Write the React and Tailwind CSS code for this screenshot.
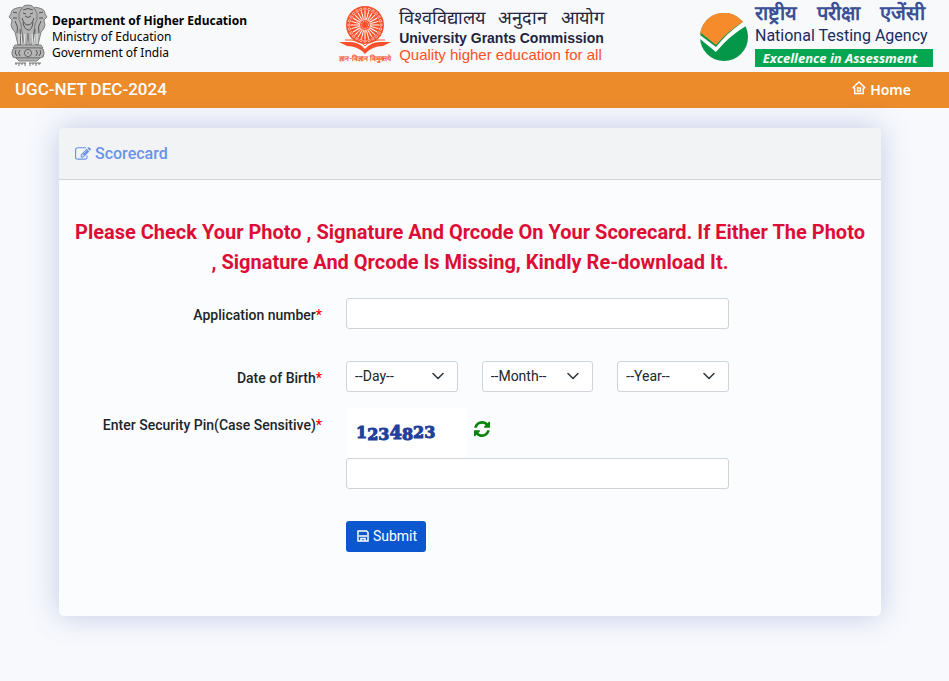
import React from "react";

const roboto = "font-[Roboto,'Liberation_Sans',sans-serif]";
const label = "text-sm font-medium leading-5 text-[#212529] sm:text-right";
const field = "h-[31px] w-full rounded-[3px] border border-[#ced4da] bg-white px-2 text-sm text-[#212529]";

function Emblem() {
  return (
    <svg viewBox="0 0 40 62" className="h-[62px] w-10 shrink-0" role="img" aria-label="State Emblem of India">
      <g fill="#b4b4b4" stroke="#6a6a6a" strokeWidth="0.8">
        <path d="M9 4Q3 5 3 10l-2 3 3 3-1 5q1 5 4 7l3 13h5V16L16 5Q12 2 9 4Z" />
        <path d="M31 4q6 1 6 6l2 3-3 3 1 5q-1 5-4 7l-3 13h-5V16L24 5q4-3 7-1Z" />
        <path d="M14 4q1-3 6-3t6 3l3 5q1 7-2 11l-1 8-2 13h-3l-1-12-1 12h-3l-2-13-1-8q-3-4-2-11Z" />
        <path d="M7 41h26l2 3H5Z" />
        <rect x="4" y="44" width="32" height="10" rx="4" />
        <path d="M8 54h24l-3 3H11Z" />
      </g>
      <g fill="none" stroke="#555" strokeWidth="1">
        <path d="M15 6q5-3 10 0M15 9l3 1m7-1-3 1M17 12q3 3 6 0M14 14q2 7 6 7t6-7M15 18q1 7 5 8t5-8M5 8l4 1M5 14h4M35 8l-4 1m4 5h-4M7 17q4 6 2 12m24-12q-4 6-2 12M12 25l1 16m14-16-1 16" />
        <path d="M8 46q-2 3 1 6m3-6q-3 3 0 6m16-6q3 3 0 6m4-6q2 3-1 6" />
      </g>
      <path d="M13 30l1 11m3-11-1 11m8-11 1 11m2-11-1 11M11 30v10m18-10v10" stroke="#e8e8e8" strokeWidth="1" />
      <circle cx="20" cy="49" r="3.5" fill="#ddd" stroke="#555" />
      <path d="M20 46v6m-3-3h6M18 47l4 4m0-4-4 4" stroke="#777" strokeWidth="0.5" />
      <path d="M7 59h11m3 0h12M8 59v2m3-2v3m3-3v2m3-2v3m5-3v3m3-3v2m3-2v3m3-3v2" stroke="#555" strokeWidth="0.8" />
    </svg>
  );
}

function UgcLogo() {
  return (
    <svg viewBox="0 0 52 48" className="h-12 w-[52px]" role="img" aria-label="UGC">
      <circle cx="26" cy="19" r="19" fill="#f9502b" />
      <g stroke="#fff" strokeWidth="1">
        {Array.from({ length: 24 }, (_, i) => (
          <g key={i} transform={`rotate(${i * 15} 26 19)`}>
            <path d="M26 13V5" />
            <circle cx="26" cy="3" r="1.2" fill="none" strokeWidth="0.6" />
          </g>
        ))}
      </g>
      <circle cx="26" cy="19" r="5.5" fill="#f9502b" stroke="#fff" strokeWidth="0.8" />
      <circle cx="26" cy="19" r="3.5" fill="none" stroke="#fff" strokeWidth="0.7" strokeDasharray="1 1" />
      <path d="M0 36h11q9 0 15 7 6-7 15-7h11l-8 4q-11 0-18 8-7-8-18-8Z" fill="#f9502b" />
      <path d="M6 34h6q9 0 14 6 5-6 14-6h6" fill="none" stroke="#f9502b" strokeWidth="1" />
    </svg>
  );
}

function NtaLogo() {
  return (
    <svg viewBox="0 0 48 48" className="size-12 shrink-0" role="img" aria-label="NTA">
      <circle cx="24" cy="24" r="24" fill="#049649" />
      <path d="M0 24a24 24 0 0 1 43-15Q28 18 16 32L1 20Z" fill="#f68b2b" />
      <path d="M0 22 16 34Q27 20 43 9l3 4Q29 23 16 39L0 26Z" fill="#fff" />
    </svg>
  );
}

function HomeIcon() {
  return (
    <svg viewBox="0 0 14 14" className="mb-1 size-[14px]" fill="none" stroke="currentColor" strokeWidth="1.4" aria-hidden="true">
      <path d="M.7 7 7 1 13.300 7M2.700 6.500v6h8.600v-6M.7 7h2M11.300 7h2M5.500 7h3v3h-3Z" />
    </svg>
  );
}

function EditIcon() {
  return (
    <svg viewBox="0 0 1792 1792" className="size-4" fill="currentColor" aria-hidden="true">
      <path d="M888 1184l116-116-152-152-116 116v56h96v96h56zm440-720q-16-16-33 1l-350 350q-17 17-1 33t33-1l350-350q17-17 1-33zm80 594v190q0 119-84.5 203.5t-203.5 84.5h-832q-119 0-203.5-84.5t-84.5-203.5v-832q0-119 84.5-203.5t203.5-84.5h832q63 0 117 25 15 7 18 23 3 17-9 29l-49 49q-14 14-32 8-23-6-45-6h-832q-66 0-113 47t-47 113v832q0 66 47 113t113 47h832q66 0 113-47t47-113v-126q0-13 9-22l64-64q15-15 35-7t20 29zm-96-738l288 288-672 672h-288v-288zm444 132l-92 92-288-288 92-92q28-28 68-28t68 28l152 152q28 28 28 68t-28 68z" />
    </svg>
  );
}

function RefreshIcon() {
  return (
    <svg viewBox="128 128 1536 1536" className="size-4" fill="currentColor" aria-hidden="true">
      <path d="M1639 1056q0 5-1 7-64 268-268 434.5t-478 166.5q-146 0-282.5-55t-243.5-157l-129 129q-19 19-45 19t-45-19-19-45v-448q0-26 19-45t45-19h448q26 0 45 19t19 45-19 45l-137 137q71 66 161 102t187 36q134 0 250-65t186-179q11-17 53-117 8-23 30-23h192q13 0 22.5 9.5t9.5 22.5zm25-800v448q0 26-19 45t-45 19h-448q-26 0-45-19t-19-45 19-45l138-138q-148-137-349-137-134 0-250 65t-186 179q-11 17-53 117-8 23-30 23h-199q-13 0-22.5-9.5t-9.5-22.5v-7q65-268 270-434.5t480-166.5q146 0 284 55.5t245 156.5l130-129q19-19 45-19t45 19 19 45z" />
    </svg>
  );
}

function SaveIcon() {
  return (
    <svg viewBox="0 0 12 12" className="size-3" fill="none" stroke="currentColor" strokeWidth="1.5" aria-hidden="true">
      <path d="M1 1h8.500L11 2.500V11H1Z" />
      <path d="M2 6h8M4 11V8.500h4V11" />
    </svg>
  );
}

function DatePart({ name, text }) {
  return (
    <div className="relative flex-1">
      <select aria-label={name} className={`${field} appearance-none pb-[2px]`}>
        <option>{text}</option>
      </select>
      <svg viewBox="0 0 16 16" className="pointer-events-none absolute top-[7px] right-3 size-4" fill="none" stroke="#343a40" strokeWidth="1.6" strokeLinecap="round" strokeLinejoin="round" aria-hidden="true">
        <path d="m3 5.500 5 5 5-5" />
      </svg>
    </div>
  );
}

function Row({ id, text, children }) {
  return (
    <div className="grid gap-x-6 gap-y-2 sm:grid-cols-[247px_minmax(0,383px)]">
      <label htmlFor={id} className={`${label} pt-[7px]`}>
        {text}<span className="text-[#ff0000]">*</span>
      </label>
      {children}
    </div>
  );
}

export default function App() {
  return (
    <div className={`min-h-screen bg-[#f8f9fd] ${roboto}`}>
      <header className="flex min-h-[72px] flex-wrap items-start justify-between gap-4 bg-[#f8f9fa] pr-4 pl-2">
        <div className="flex gap-1 pt-1">
          <Emblem />
          <div className="pt-[9px] font-['Noto_Sans','Open_Sans',sans-serif] text-[12px] leading-4 text-black">
            <p className="font-bold">Department of Higher Education</p>
            <p>Ministry of Education</p>
            <p>Government of India</p>
          </div>
        </div>
        <div className="flex gap-2 pt-[6px] pr-1">
          <div className="flex flex-col items-center">
            <UgcLogo />
            <span className="text-[7px] leading-[10px] font-bold text-[#f9502b]">ज्ञान-विज्ञान विमुक्तये</span>
          </div>
          <div className="font-['Liberation_Sans',Arial,sans-serif] text-[#24243f]">
            <p className="flex justify-between text-[18px] leading-6 font-medium"><span>विश्वविद्यालय</span> <span>अनुदान</span> <span>आयोग</span></p>
            <p className="text-[14px] leading-4 font-bold">University Grants Commission</p>
            <p className="text-[15px] leading-[18px] text-[#ff5022]">Quality higher education for all</p>
          </div>
        </div>
        <div className="flex items-end gap-[7px] pt-[3px]">
          <div className="pb-[6px]"><NtaLogo /></div>
          <div className="w-[178px] text-[#192c61]">
            <p className="flex w-[170px] justify-between text-[20px] leading-5 font-bold text-[#3b5096]"><span>राष्ट्रीय</span> <span>परीक्षा</span> <span>एजेंसी</span></p>
            <p className="text-base leading-[26px] font-normal whitespace-nowrap">National Testing Agency</p>
            <p className="bg-[#04a651] pr-2 text-center font-['Open_Sans',sans-serif] text-[13px] leading-[18px] font-bold whitespace-nowrap text-white italic">Excellence in Assessment</p>
          </div>
        </div>
      </header>
      <nav className="flex h-9 items-center justify-between bg-[#eb8b2a] pr-[38px] pl-[15px] text-white">
        <span className="text-[17px] font-medium">UGC-NET DEC-2024</span>
        <a href="#" className="flex items-center gap-1 font-['Noto_Sans',sans-serif] text-sm font-semibold"><HomeIcon />Home</a>
      </nav>
      <main className="mr-[68px] ml-[59px] mt-5 rounded-[5px] bg-[#fbfcfe] pb-16 shadow-[0_0_30px_rgba(62,97,172,0.3)]">
        <h1 className="flex h-[52px] items-center gap-1 rounded-t-[5px] border-b border-[#d0d3d7] bg-[#f2f3f5] px-4 text-base font-medium text-[#6993e8]">
          <EditIcon />Scorecard
        </h1>
        <form className="px-4 pt-[37px]" onSubmit={(e) => e.preventDefault()}>
          <h2 className="text-center text-xl leading-[30px] font-bold text-[#dc0e36]">
            Please Check Your Photo , Signature And Qrcode On Your Scorecard. If Either The Photo , Signature And Qrcode Is Missing, Kindly Re-download It.
          </h2>
          <div className="mt-[21px]">
            <Row id="application" text="Application number"><input id="application" className={field} /></Row>
          </div>
          <div className="mt-8">
            <Row id="birth" text="Date of Birth">
              <div id="birth" role="group" aria-label="Date of Birth" className="flex gap-6">
                <DatePart name="Day" text="--Day--" />
                <DatePart name="Month" text="--Month--" />
                <DatePart name="Year" text="--Year--" />
              </div>
            </Row>
          </div>
          <div className="mt-4">
            <Row id="pin" text="Enter Security Pin(Case Sensitive)">
              <div>
                <div className="flex h-[50px] items-center gap-2">
                  <div className="flex h-full w-[120px] items-center bg-white pl-[10px] font-['DejaVu_Serif',serif] text-base font-black text-[#21409a] [-webkit-text-stroke:1px_#21409a]">
                    <span>1</span><span className="pt-1">23</span><span className="text-lg">4</span><span className="pt-1">8</span><span>23</span>
                  </div>
                  <button type="button" aria-label="Refresh security pin" className="mb-2 text-[#078307]"><RefreshIcon /></button>
                </div>
                <input id="pin" className={field} />
                <button type="submit" className="mt-8 flex h-[31px] w-20 items-center justify-center gap-1 rounded-[3px] bg-[#0b57d0] pb-px pl-[2px] text-sm text-white"><SaveIcon />Submit</button>
              </div>
            </Row>
          </div>
        </form>
      </main>
    </div>
  );
}
